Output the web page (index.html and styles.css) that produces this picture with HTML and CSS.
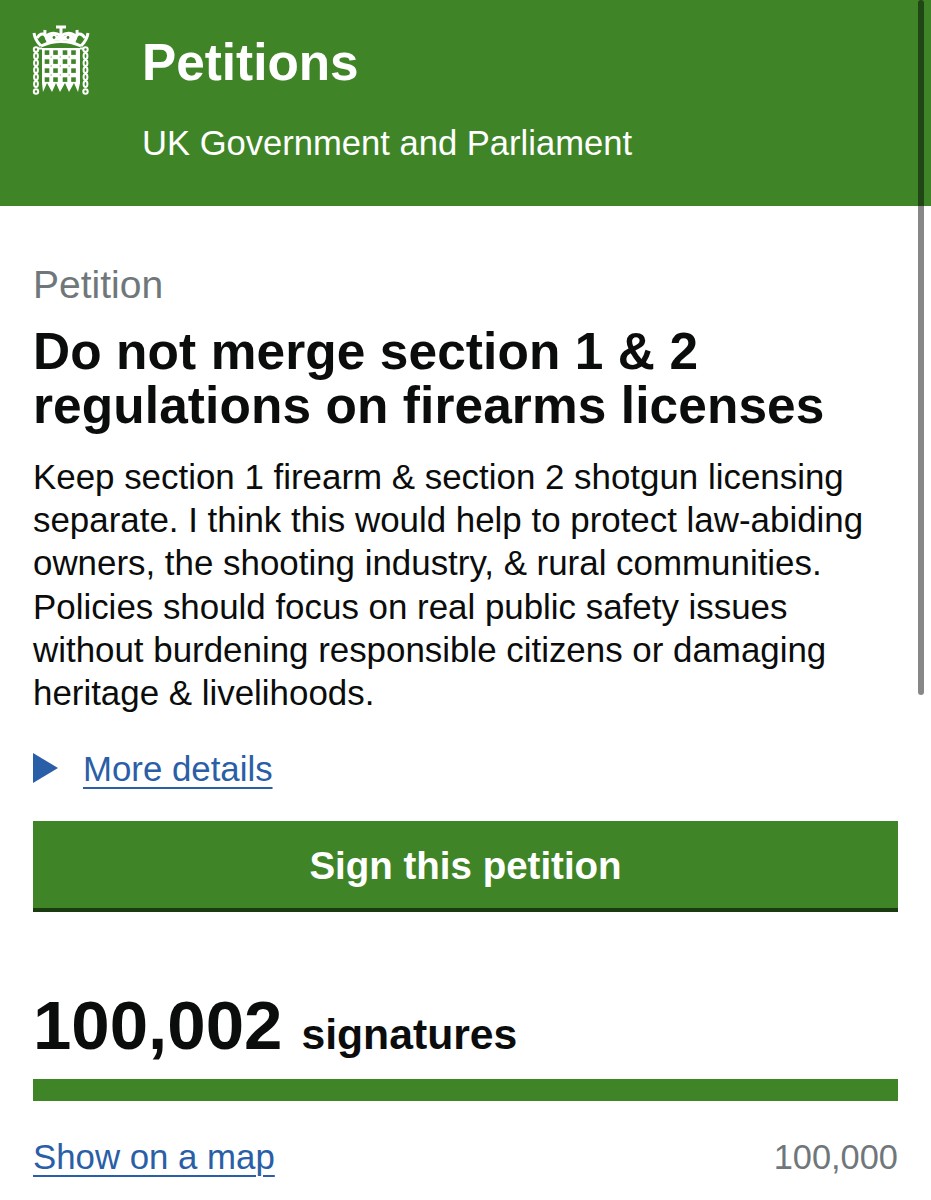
FILE: index.html
```html
<!DOCTYPE html>
<html lang="en">
<head>
<meta charset="utf-8">
<title>Petitions</title>
<link rel="stylesheet" href="styles.css">
</head>
<body>
<header class="site-header">
  <svg class="logo" viewBox="0 0 58 70" aria-hidden="true">
    <path class="gate" d="M15 19 Q29 11 43 19 L45 12 L37 9 L29 12 L21 9 L13 12 Z"/>
    <g class="crown">
      <path d="M9 21 Q29 12 49 21"/>
      <path d="M9 21 Q3 15 2 8"/><path d="M49 21 Q55 15 56 8"/>
      <path d="M17 17 Q12 11 13 5"/><path d="M41 17 Q46 11 45 5"/>
      <path d="M29 15 V1"/><path d="M24 2 H34"/>
      <path d="M13 12 Q21 5 29 11 Q37 5 45 12"/>
      <path d="M5 13 Q9 7 13 10"/><path d="M53 13 Q49 7 45 10"/>
    </g>
    <g class="cut">
      <circle cx="22" cy="12.500" r="1.400"/><circle cx="36" cy="12.500" r="1.400"/>
      <circle cx="8" cy="15" r="1.300"/><circle cx="50" cy="15" r="1.300"/>
    </g>
    <path class="gate" d="M10 23 H48 V58 L46 67 L42 58 L37 67 L33 58 L28 67 L24 58 L20 67 L15 58 L11 67 L10 58 Z"/>
    <g class="cut">
      <rect x="12.700" y="25.300" width="4.600" height="4.600"/><rect x="21.200" y="25.300" width="4.600" height="4.600"/><rect x="30.700" y="25.300" width="4.600" height="4.600"/><rect x="39.200" y="25.300" width="4.600" height="4.600"/>
      <rect x="12.700" y="34.300" width="4.600" height="4.600"/><rect x="21.200" y="34.300" width="4.600" height="4.600"/><rect x="30.700" y="34.300" width="4.600" height="4.600"/><rect x="39.200" y="34.300" width="4.600" height="4.600"/>
      <rect x="12.700" y="43.300" width="4.600" height="4.600"/><rect x="21.200" y="43.300" width="4.600" height="4.600"/><rect x="30.700" y="43.300" width="4.600" height="4.600"/><rect x="39.200" y="43.300" width="4.600" height="4.600"/>
      <rect x="12.700" y="52.300" width="4.600" height="4.600"/><rect x="21.200" y="52.300" width="4.600" height="4.600"/><rect x="30.700" y="52.300" width="4.600" height="4.600"/><rect x="39.200" y="52.300" width="4.600" height="4.600"/>
    </g>
    <g class="dots">
      <circle cx="19.200" cy="32" r=".8"/><circle cx="28.300" cy="32" r=".8"/><circle cx="37.200" cy="32" r=".8"/>
      <circle cx="19.200" cy="41" r=".8"/><circle cx="28.300" cy="41" r=".8"/><circle cx="37.200" cy="41" r=".8"/>
      <circle cx="19.200" cy="50" r=".8"/><circle cx="28.300" cy="50" r=".8"/><circle cx="37.200" cy="50" r=".8"/>
    </g>
    <g class="chain">
      <circle cx="4" cy="24.500" r="2.200"/><ellipse cx="4" cy="31" rx="1.900" ry="3"/><ellipse cx="4" cy="38" rx="1.900" ry="3"/><ellipse cx="4" cy="45" rx="1.900" ry="3"/><ellipse cx="4" cy="52" rx="1.900" ry="3"/><ellipse cx="4" cy="59" rx="1.900" ry="3"/><circle cx="4" cy="66.500" r="2.200"/>
      <circle cx="53.500" cy="24.500" r="2.200"/><ellipse cx="53.500" cy="31" rx="1.900" ry="3"/><ellipse cx="53.500" cy="38" rx="1.900" ry="3"/><ellipse cx="53.500" cy="45" rx="1.900" ry="3"/><ellipse cx="53.500" cy="52" rx="1.900" ry="3"/><ellipse cx="53.500" cy="59" rx="1.900" ry="3"/><circle cx="53.500" cy="66.500" r="2.200"/>
      <path d="M6 23.500 H10"/><path d="M48 23.500 H51.500"/>
    </g>
  </svg>
  <div class="brand">
    <div class="brand-name">Petitions</div>
    <div class="brand-sub">UK Government and Parliament</div>
  </div>
</header>
<main class="content">
  <p class="eyebrow">Petition</p>
  <h1 class="title">Do not merge section 1 &amp; 2 regulations on firearms licenses</h1>
  <p class="summary">Keep section 1 firearm &amp; section 2 shotgun licensing separate. I think this would help to protect law-abiding owners, the shooting industry, &amp; rural communities. Policies should focus on real public safety issues without burdening responsible citizens or damaging heritage &amp; livelihoods.</p>
  <div class="details">
    <span class="arrow"></span>
    <a class="link" href="#">More details</a>
  </div>
  <a class="sign" href="#">Sign this petition</a>
  <div class="count"><span class="count-num">100,002</span><span class="count-label">signatures</span></div>
  <div class="progress"></div>
  <div class="progress-foot">
    <a class="link" href="#">Show on a map</a>
    <span class="goal">100,000</span>
  </div>
</main>
<div class="scrollbar"></div>
</body>
</html>
```
FILE: styles.css
```css
* { box-sizing: border-box; }
html, body { margin: 0; padding: 0; }
body {
  width: 931px;
  height: 1200px;
  overflow: hidden;
  background: #fff;
  color: #0b0c0c;
  font-family: "Liberation Sans", Arial, sans-serif;
}
.site-header {
  height: 206px;
  background: #3f8528;
  display: flex;
  align-items: flex-start;
  padding: 25px 0 0 32px;
  color: #fff;
}
.logo { width: 58px; height: 70px; flex: none; }
.logo .crown { fill: none; stroke: #fff; stroke-width: 3; }
.logo .gate { fill: #fff; }
.logo .cut { fill: #3f8528; }
.logo .dots { fill: #3f8528; opacity: .55; }
.logo .chain { fill: none; stroke: #fff; stroke-width: 2; }
.brand { margin-left: 52px; }
.brand-name { font-size: 51.3px; line-height: 56px; font-weight: 700; margin-top: 10px; }
.brand-sub { font-size: 34.6px; line-height: 40px; margin-top: 32px; }
.content { padding: 0 33px; }
.eyebrow { margin: 58px 0 0; font-size: 39px; line-height: 41px; color: #6f777b; }
.title { margin: 19px 0 0; font-size: 51.4px; line-height: 54px; font-weight: 700; letter-spacing: .1px; }
.summary { margin: 23px 0 0; font-size: 34.9px; line-height: 43.2px; }
.details { display: flex; align-items: center; margin-top: 33px; height: 44px; }
.arrow {
  width: 0; height: 0;
  border-left: 25px solid #2a5ea6;
  border-top: 15px solid transparent;
  border-bottom: 15px solid transparent;
  margin: 0 25px 3px 0;
}
.link { color: #2a5ea6; font-size: 34.8px; line-height: 40px; text-decoration: underline; text-underline-offset: 6px; text-decoration-thickness: 2px; }
.sign {
  display: block;
  margin: 30px 0 0;
  height: 91px;
  background: #3f8528;
  border-bottom: 4px solid #1a3a10;
  color: #fff;
  font-size: 38.5px;
  line-height: 89px;
  font-weight: 700;
  text-align: center;
  text-decoration: none;
}
.count { margin-top: 69px; height: 90px; display: flex; align-items: baseline; gap: 19px; }
.count-num { font-size: 69px; line-height: 90px; font-weight: 700; }
.count-label { font-size: 42.7px; font-weight: 700; }
.progress { margin-top: 8px; height: 22px; background: #3f8528; }
.progress-foot { display: flex; justify-content: space-between; align-items: center; margin-top: 36px; }
.goal { color: #6f777b; font-size: 34.4px; line-height: 40px; }
.scrollbar {
  position: absolute;
  top: 0; left: 918px;
  width: 6px; height: 695px;
  border-radius: 3px;
  background: rgba(0,0,0,.47);
}
```
